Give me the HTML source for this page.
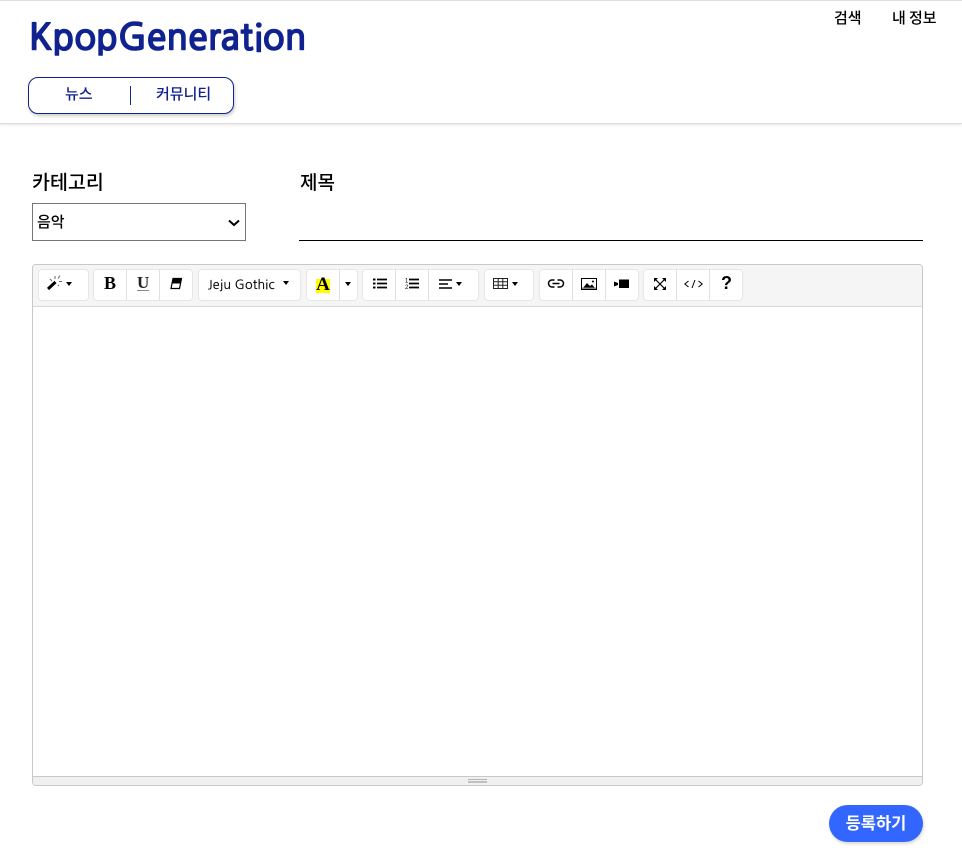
<!DOCTYPE html>
<html lang="ko"><head><meta charset="utf-8"><title>KpopGeneration</title>
<style>
*{box-sizing:border-box}
html,body{margin:0;padding:0;background:#fff}
body{width:962px;height:868px;position:relative;overflow:hidden;font-family:"Liberation Sans","Noto Sans CJK KR",sans-serif;color:#000}
.a{position:absolute;white-space:nowrap}
.k{font-family:"Noto Sans CJK KR","Liberation Sans",sans-serif}
#hdr{left:0;top:0;width:962px;height:124px;border-top:1px solid #ddd;border-bottom:1px solid #ddd;box-shadow:0 1px 3px rgba(0,0,0,.1)}
.grp{position:absolute;top:269px;height:32px;background:#fff;border:1px solid #e3e6ea;border-radius:4px}
.sep{position:absolute;top:269px;width:1px;height:32px;background:#dde1e6}
.caret{position:absolute;width:0;height:0;border-left:3.500px solid transparent;border-right:3.500px solid transparent;border-top:4px solid #000}
svg{position:absolute;overflow:visible}
</style></head><body>
<div class="a" id="hdr"></div>
<div class="a" style="left:29px;top:13px;font-family:'NanumGothic','Noto Sans CJK KR',sans-serif;font-size:37px;line-height:50px;font-weight:700;color:#10228f;letter-spacing:-.6px;-webkit-text-stroke:.6px #10228f;font-variant-ligatures:none;font-feature-settings:'liga' 0,'clig' 0,'dlig' 0">KpopGenerat<span style="display:inline-block;margin-left:1.500px">i</span>on</div>
<div class="a k" style="left:834px;top:8px;font-size:15px;line-height:20px;font-weight:500">검색</div>
<div class="a k" style="left:892px;top:8px;font-size:15px;line-height:20px;font-weight:500;word-spacing:-1px">내 정보</div>

<div class="a" style="left:28px;top:77px;width:206px;height:37px;border:1px solid #10228f;border-radius:10px;box-shadow:1px 2px 3px rgba(0,0,0,.2);background:#fff"></div>
<div class="a k" style="left:65px;top:84px;font-size:15px;line-height:20px;font-weight:500;color:#10228f">뉴스</div>
<div class="a" style="left:130px;top:86px;width:1px;height:19px;background:#10228f"></div>
<div class="a k" style="left:156px;top:84px;font-size:15px;line-height:20px;font-weight:500;color:#10228f">커뮤니티</div>

<div class="a k" style="left:32px;top:168px;font-size:19.500px;line-height:26px;font-weight:500">카테고리</div>
<div class="a k" style="left:300px;top:169px;font-size:19px;line-height:26px;font-weight:500">제목</div>
<div class="a" style="left:32px;top:203px;width:214px;height:38px;border:1px solid #767676;background:#fff"></div>
<div class="a k" style="left:37px;top:211px;font-size:15px;line-height:21px;font-weight:500">음악</div>
<svg style="left:228px;top:219px" width="12" height="8" viewBox="0 0 12 8"><path d="M1 1.500L6 6L11 1.500" fill="none" stroke="#000" stroke-width="2"/></svg>
<div class="a" style="left:299px;top:240px;width:624px;height:1px;background:#000"></div>

<!-- editor -->
<div class="a" style="left:32px;top:264px;width:891px;height:522px;border:1px solid #c8c8c8;border-radius:4px;background:#fff;overflow:hidden">
  <div style="position:absolute;left:0;top:0;width:889px;height:42px;background:#f5f5f5;border-bottom:1px solid #d8d8d8"></div>
  <div style="position:absolute;left:0;bottom:0;width:889px;height:9px;background:#f0f0f0;border-top:1px solid #c8c8c8"></div>
</div>
<div class="a" style="left:468px;top:779px;width:19px;height:1px;background:#b5b5b5"></div>
<div class="a" style="left:468px;top:781px;width:19px;height:2px;background:#c0c0c0"></div>

<div class="grp" style="left:38px;width:51px"></div>
<div class="grp" style="left:93px;width:100px"></div>
<div class="grp" style="left:198px;width:103px"></div>
<div class="grp" style="left:306px;width:52px"></div>
<div class="grp" style="left:362px;width:117px"></div>
<div class="grp" style="left:484px;width:50px"></div>
<div class="grp" style="left:539px;width:100px"></div>
<div class="grp" style="left:643px;width:100px"></div>
<div class="sep" style="left:126px"></div><div class="sep" style="left:159px"></div>
<div class="sep" style="left:339px"></div>
<div class="sep" style="left:395px"></div><div class="sep" style="left:428px"></div>
<div class="sep" style="left:572px"></div><div class="sep" style="left:605px"></div>
<div class="sep" style="left:676px"></div><div class="sep" style="left:709px"></div>

<!-- magic -->
<svg style="left:46px;top:275px" width="20" height="16" viewBox="0 0 20 16"><path d="M2 14L9.500 7" stroke="#000" stroke-width="3"/><path d="M9 1v3M14 .5l-2 3M13 6.500h3M12 10l1 1M4 4l2 2" stroke="#666" stroke-width="1"/></svg>
<div class="caret" style="left:66px;top:282px"></div>
<!-- B U eraser -->
<div class="a" style="left:104px;top:273px;font:bold 18px/20px 'Liberation Serif',serif">B</div>
<div class="a" style="left:137px;top:273px;font:bold 17px/20px 'Liberation Serif',serif;color:#222">U</div>
<div class="a" style="left:137px;top:290px;width:12px;height:1px;background:#888"></div>
<svg style="left:170px;top:278px" width="12" height="11" viewBox="0 0 12 11"><path d="M3 .5H11.500L9.500 10.500H1Z" fill="#fff" stroke="#000" stroke-width="1.200"/><path d="M3 .5H11.500L10.300 5.500H2Z" fill="#000"/></svg>
<!-- font -->
<div class="a" style="left:208px;top:275px;font-size:12.500px;line-height:20px;letter-spacing:.2px;color:#000;-webkit-text-stroke:.2px #000;font-family:'NanumGothic','Noto Sans CJK KR','Liberation Sans',sans-serif">Jeju Gothic</div>
<div class="caret" style="left:283px;top:281px"></div>
<!-- color -->
<div class="a" style="left:316px;top:279px;width:14px;height:14px;background:#ff0"></div>
<div class="a" style="left:313px;top:275px;width:20px;text-align:center;font:bold 19px/20px 'Liberation Serif',serif">A</div>
<div class="caret" style="left:345px;top:282px"></div>
<!-- ul -->
<svg style="left:373px;top:278px" width="14" height="11" viewBox="0 0 14 11"><path d="M4 1.500H14M4 5.500H14M4 9.500H14" stroke="#000" stroke-width="1.800"/><path d="M0 .5h2.500v2H0zM0 4.500h2.500v2H0zM0 8.500h2.500v2H0z" fill="#000"/></svg>
<!-- ol -->
<svg style="left:405px;top:278px" width="14" height="11" viewBox="0 0 14 11"><path d="M4 1.500H14M4 5.500H14M4 9.500H14" stroke="#000" stroke-width="1.800"/><text x="0" y="4.500" font-size="6" font-family="Liberation Sans">1</text><text x="0" y="11" font-size="6" font-family="Liberation Sans">2</text></svg>
<!-- align -->
<svg style="left:439px;top:279px" width="13" height="10" viewBox="0 0 13 10"><path d="M0 1H13M0 5H9M0 9H13" stroke="#000" stroke-width="1.500"/></svg>
<div class="caret" style="left:456px;top:282px"></div>
<!-- table -->
<svg style="left:493px;top:278px" width="15" height="11" viewBox="0 0 15 11"><path d="M.5 .5h14v10H.5zM.5 3.800h14M.5 7.200h14M5.200 .5v10M9.800 .5v10" fill="none" stroke="#222" stroke-width="1"/></svg>
<div class="caret" style="left:512px;top:282px"></div>
<!-- link -->
<svg style="left:548px;top:279px" width="16" height="9" viewBox="0 0 16 9"><path d="M6.500 1H4a3.500 3.500 0 0 0 0 7H6.500M9.500 1H12a3.500 3.500 0 0 1 0 7H9.500M4.500 4.500H11.500" fill="none" stroke="#000" stroke-width="1.500"/></svg>
<!-- picture -->
<svg style="left:581px;top:278px" width="16" height="12" viewBox="0 0 16 12"><path d="M.5 .5h15v11H.5z" fill="#fff" stroke="#000"/><path d="M2 10L6 5L9 8L11 6.500L14 10Z" fill="#000"/><circle cx="12" cy="3.500" r="1" fill="#000"/><path d="M1 9.500h14v1.500H1z" fill="#888"/></svg>
<!-- video -->
<svg style="left:614px;top:279px" width="15" height="10" viewBox="0 0 15 10"><path d="M5 .5H15V9H5zM0 2.500L4 4V6L0 7.500Z" fill="#000"/></svg>
<!-- fullscreen -->
<svg style="left:654px;top:278px" width="12" height="12" viewBox="0 0 12 12"><path d="M1.500 1.500L10.500 10.500M10.500 1.500L1.500 10.500" stroke="#000" stroke-width="1.200"/><path d="M0 0h4L0 4zM12 0v4L8 0zM0 12V8l4 4zM12 12H8l4-4z" fill="#000"/></svg>
<!-- code -->
<svg style="left:684px;top:279px" width="19" height="10" viewBox="0 0 19 10"><path d="M4.500 2L.8 5L4.500 8M14.500 2L18.200 5L14.500 8M11 1L8 9" fill="none" stroke="#000" stroke-width="1"/></svg>
<!-- help -->
<div class="a" style="left:721px;top:273px;font:bold 18px/20px 'Liberation Sans',sans-serif">?</div>

<div class="a" style="left:829px;top:805px;width:94px;height:37px;border-radius:19px;background:#3366ff;box-shadow:1px 2px 3px rgba(0,0,0,.15)"></div>
<div class="a k" style="left:829px;top:810px;width:94px;text-align:center;font-size:16.500px;line-height:24px;font-weight:700;color:#fff">등록하기</div>
</body></html>
